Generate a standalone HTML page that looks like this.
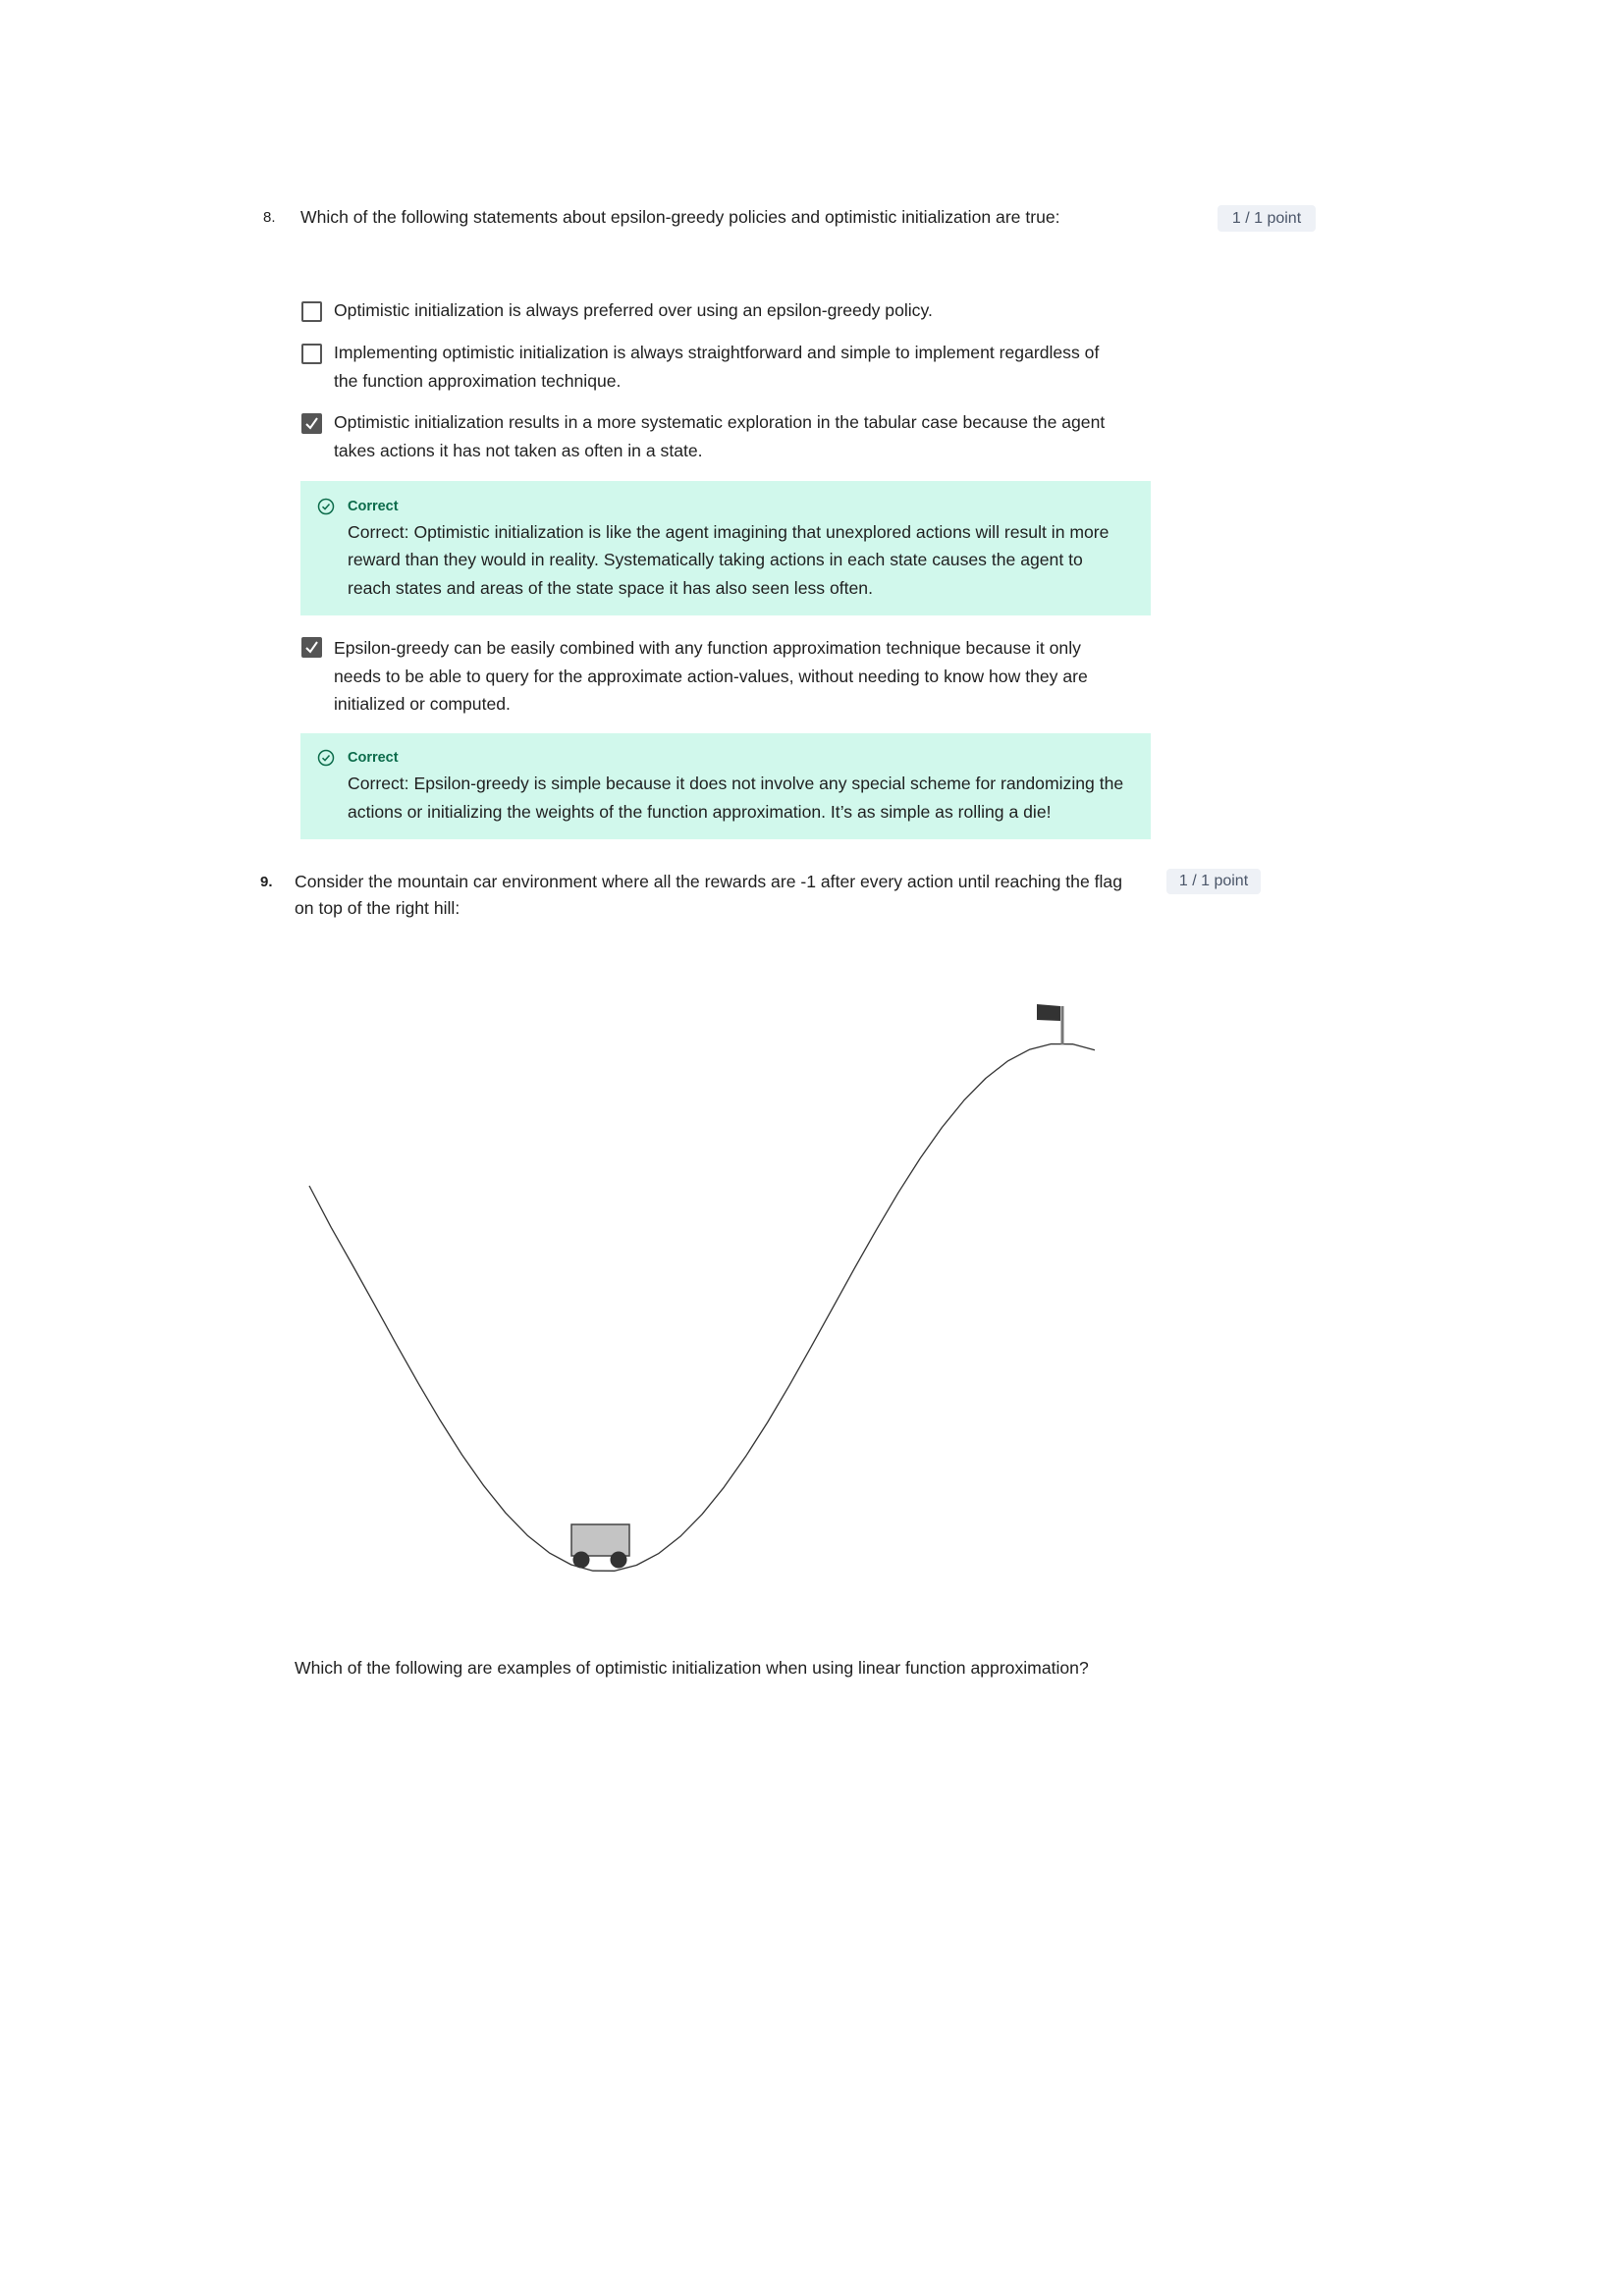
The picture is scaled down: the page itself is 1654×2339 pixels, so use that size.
<!DOCTYPE html>
<html><head><meta charset="utf-8"><style>
html,body{margin:0;padding:0;background:#fff;}
body{width:1654px;height:2339px;position:relative;font-family:"Liberation Sans",sans-serif;color:#1f1f1f;font-size:17.6px;}
.a{position:absolute;white-space:nowrap;line-height:29px;}
.cb{position:absolute;width:17px;height:17px;border:2px solid #555;border-radius:2px;background:#fff;}
.cb.on{background:#555;}
.badge{position:absolute;background:#eef1f6;color:#4a5568;border-radius:4px;font-size:16px;display:flex;align-items:center;justify-content:center;}
.green{position:absolute;background:#d1f8ec;}
.lab{color:#0b6b4a;font-weight:bold;font-size:14.5px;}
</style></head><body>

<div class="a" style="left:268px;top:207px;font-size:15px">8.</div>
<div class="a" style="left:306px;top:207px">Which of the following statements about epsilon-greedy policies and optimistic initialization are true:</div>
<div class="badge" style="left:1240px;top:209px;width:100px;height:27px">1 / 1 point</div>

<div class="cb" style="left:307px;top:307px"></div>
<div class="a" style="left:340px;top:302px">Optimistic initialization is always preferred over using an epsilon-greedy policy.</div>

<div class="cb" style="left:307px;top:350px"></div>
<div class="a" style="left:340px;top:345px">Implementing optimistic initialization is always straightforward and simple to implement regardless of</div>
<div class="a" style="left:340px;top:374px">the function approximation technique.</div>

<div class="cb on" style="left:307px;top:421px"><svg width="17" height="17" viewBox="0 0 17 17" style="position:absolute;left:0;top:0"><path d="M3 9 L7 13 L14 3" stroke="#fff" stroke-width="2" fill="none"/></svg></div>
<div class="a" style="left:340px;top:416px">Optimistic initialization results in a more systematic exploration in the tabular case because the agent</div>
<div class="a" style="left:340px;top:445px">takes actions it has not taken as often in a state.</div>

<div class="green" style="left:306px;top:490px;width:866px;height:137px"></div>
<svg class="a" style="left:323px;top:507px" width="18" height="18" viewBox="0 0 18 18"><circle cx="9" cy="9" r="7.5" stroke="#0b6b4a" stroke-width="1.5" fill="none"/><path d="M5.5 9.2 L8 11.5 L12.5 6.5" stroke="#0b6b4a" stroke-width="1.5" fill="none"/></svg>
<div class="a lab" style="left:354px;top:502px">Correct</div>
<div class="a" style="left:354px;top:528px">Correct: Optimistic initialization is like the agent imagining that unexplored actions will result in more</div>
<div class="a" style="left:354px;top:556px">reward than they would in reality. Systematically taking actions in each state causes the agent to</div>
<div class="a" style="left:354px;top:585px">reach states and areas of the state space it has also seen less often.</div>

<div class="cb on" style="left:307px;top:649px"><svg width="17" height="17" viewBox="0 0 17 17" style="position:absolute;left:0;top:0"><path d="M3 9 L7 13 L14 3" stroke="#fff" stroke-width="2" fill="none"/></svg></div>
<div class="a" style="left:340px;top:646px">Epsilon-greedy can be easily combined with any function approximation technique because it only</div>
<div class="a" style="left:340px;top:675px">needs to be able to query for the approximate action-values, without needing to know how they are</div>
<div class="a" style="left:340px;top:703px">initialized or computed.</div>

<div class="green" style="left:306px;top:747px;width:866px;height:108px"></div>
<svg class="a" style="left:323px;top:763px" width="18" height="18" viewBox="0 0 18 18"><circle cx="9" cy="9" r="7.5" stroke="#0b6b4a" stroke-width="1.5" fill="none"/><path d="M5.5 9.2 L8 11.5 L12.5 6.5" stroke="#0b6b4a" stroke-width="1.5" fill="none"/></svg>
<div class="a lab" style="left:354px;top:758px">Correct</div>
<div class="a" style="left:354px;top:784px">Correct: Epsilon-greedy is simple because it does not involve any special scheme for randomizing the</div>
<div class="a" style="left:354px;top:813px">actions or initializing the weights of the function approximation. It’s as simple as rolling a die!</div>

<div class="a" style="left:265px;top:884px;font-size:15px;font-weight:bold">9.</div>
<div class="a" style="left:300px;top:884px">Consider the mountain car environment where all the rewards are -1 after every action until reaching the flag</div>
<div class="a" style="left:300px;top:911px">on top of the right hill:</div>
<div class="badge" style="left:1188px;top:885px;width:96px;height:26px">1 / 1 point</div>

<svg style="position:absolute;left:0;top:0" width="1654" height="1800">
<polyline fill="none" stroke="#333" stroke-width="1.3" stroke-linejoin="round" points="315,1208 337.2,1250.3 359.4,1289.5 381.7,1329.6 403.9,1369.9 426.1,1409.3 448.3,1446.9 470.5,1482 492.8,1513.7 515,1541.3 537.2,1564.2 559.4,1581.9 581.7,1594 603.9,1600.2 626.1,1600.3 648.3,1594.5 670.6,1582.7 692.8,1565.3 715,1542.7 737.2,1515.3 759.4,1483.8 781.7,1449 803.9,1411.4 826.1,1372.1 848.3,1331.9 870.5,1291.7 892.8,1252.4 915,1214.8 937.2,1180 959.4,1148.5 981.7,1121.1 1003.9,1098.5 1026.1,1081.1 1048.3,1069.3 1070.6,1063.5 1092.8,1063.7 1115,1069.8"/>
<line x1="1082" y1="1025" x2="1082" y2="1064" stroke="#777" stroke-width="3"/>
<path d="M1056 1023 L1080 1025 L1080 1040 L1056 1039 Z" fill="#333"/>
<rect x="582" y="1553" width="59" height="32" fill="#c4c4c4" stroke="#444" stroke-width="1.5"/>
<circle cx="592" cy="1589" r="8.5" fill="#333"/>
<circle cx="630" cy="1589" r="8.5" fill="#333"/>
</svg>

<div class="a" style="left:300px;top:1685px">Which of the following are examples of optimistic initialization when using linear function approximation?</div>
</body></html>
